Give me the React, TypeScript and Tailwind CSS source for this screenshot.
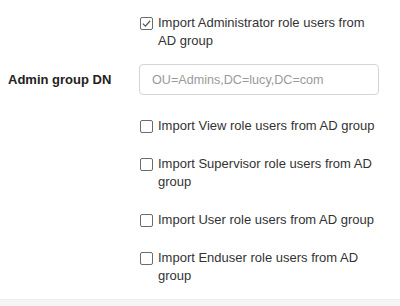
import { useState } from "react";

type Role = { key: string; label: string };

const ROLES: Role[] = [
	{ key: "view", label: "Import View role users from AD group" },
	{ key: "supervisor", label: "Import Supervisor role users from AD group" },
	{ key: "user", label: "Import User role users from AD group" },
	{ key: "enduser", label: "Import Enduser role users from AD group" },
];

function CheckRow({
	label,
	checked,
	onToggle,
	className,
}: {
	label: string;
	checked: boolean;
	onToggle: () => void;
	className?: string;
}) {
	return (
		<div className={`flex ${className ?? ""}`}>
			<div className="w-[140px] shrink-0" />
			<label
				className="flex flex-1 cursor-pointer items-start gap-[5px] text-[13px] leading-[18px] text-[#333]"
				onClick={onToggle}
			>
				<span className="mt-[3px] flex h-[13px] w-[13px] shrink-0 items-center justify-center rounded-[2px] border border-[#6b6b6b] bg-white">
					{checked && (
						<svg viewBox="0 0 12 12" className="h-[11px] w-[11px]">
							<path
								d="M2 6.2 L4.8 9 L10 3"
								fill="none"
								stroke="#555"
								strokeWidth="1.3"
							/>
						</svg>
					)}
				</span>
				<span>{label}</span>
			</label>
		</div>
	);
}

function App() {
	const [adminChecked, setAdminChecked] = useState(true);
	const [dn, setDn] = useState("");
	const [roles, setRoles] = useState<Record<string, boolean>>({});

	// spacing between the role rows, read off the screen
	const margins = ["mt-[22px]", "mt-[20px]", "mt-[20px]", "mt-[20px]"];

	return (
		<div className="min-h-screen bg-white font-['Liberation_Sans',Arial,sans-serif]">
			<div className="pr-[21px] pt-[14px]">
				<CheckRow
					label="Import Administrator role users from AD group"
					checked={adminChecked}
					onToggle={() => setAdminChecked(!adminChecked)}
				/>

				<div className="mt-[14px] flex items-center">
					<label
						htmlFor="admin-dn"
						className="w-[139px] shrink-0 pl-2 text-[13px] font-bold text-[#222]"
					>
						Admin group DN
					</label>
					<input
						id="admin-dn"
						type="text"
						value={dn}
						onChange={(e) => setDn(e.target.value)}
						placeholder="OU=Admins,DC=lucy,DC=com"
						className="h-[31px] flex-1 rounded-[4px] border border-[#d4d4d4] bg-white px-3 text-[12.6px] text-[#333] outline-none placeholder:text-[#9a9a9a]"
					/>
				</div>

				{ROLES.map((r, i) => (
					<CheckRow
						key={r.key}
						label={r.label}
						checked={!!roles[r.key]}
						onToggle={() => setRoles({ ...roles, [r.key]: !roles[r.key] })}
						className={margins[i]}
					/>
				))}
			</div>

			<div className="mt-[14px] h-[20px] border-t border-[#ededed] bg-[#f5f5f5]" />
		</div>
	);
}

export default App;
